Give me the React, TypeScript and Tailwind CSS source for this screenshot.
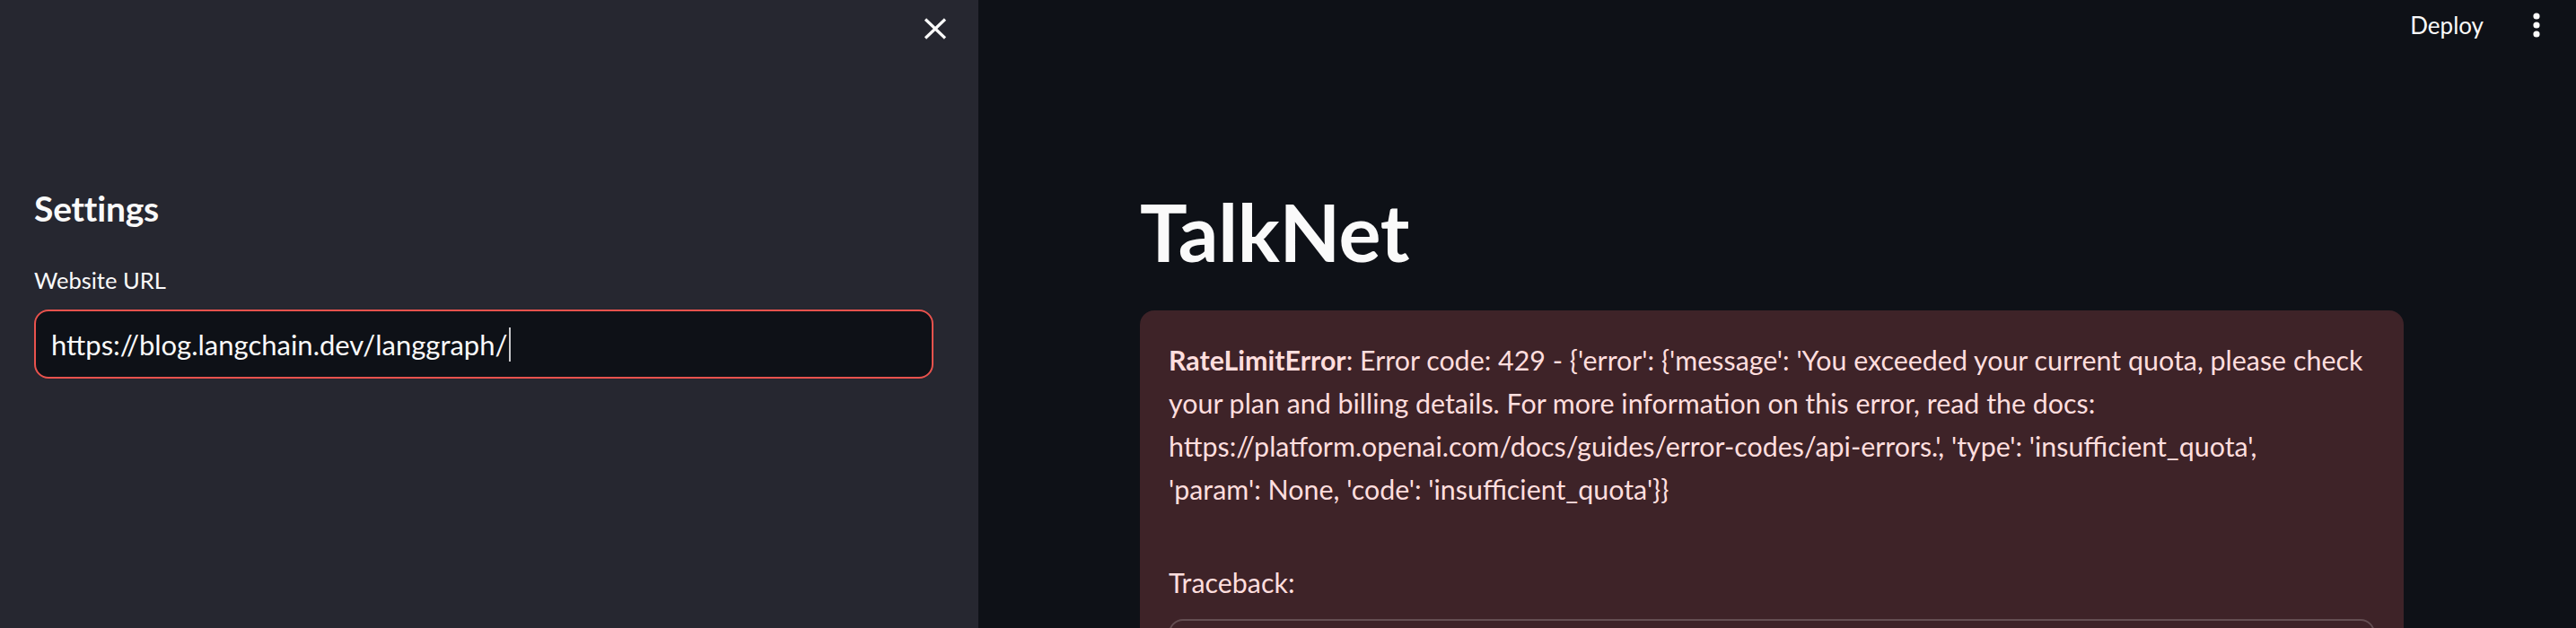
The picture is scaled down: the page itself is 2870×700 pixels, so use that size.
import React from "react";

function CloseIcon() {
  return (
    <svg width="26" height="24" viewBox="0 0 26 24" fill="none">
      <path d="M2 1.5 L24 22.5 M24 1.5 L2 22.5" stroke="#fafafa" strokeWidth="3.2" strokeLinecap="butt" />
    </svg>
  );
}

function DotsIcon() {
  return (
    <svg width="10" height="28" viewBox="0 0 10 28" fill="#fafafa">
      <circle cx="5" cy="4" r="3.6" />
      <circle cx="5" cy="14" r="3.6" />
      <circle cx="5" cy="24" r="3.6" />
    </svg>
  );
}

export default function App() {
  return (
    <div className="flex h-[700px] w-[2870px] overflow-hidden font-['Lato','Noto_Sans',sans-serif] text-[#fafafa]">
      {/* Sidebar */}
      <aside className="flex h-full w-[1090px] shrink-0 flex-col bg-[#262730]">
        <div className="flex shrink-0 justify-end pt-[20px] pr-[35px]">
          <CloseIcon />
        </div>
        <div className="mt-[165px] shrink-0 pl-[38px] pr-[50px]">
          <h2 className="text-[39px] font-bold leading-[46px] tracking-[-0.2px]">Settings</h2>
          <div className="mt-[39px] text-[25.5px] leading-[36px]">Website URL</div>
          <div className="mt-[15px] flex h-[77px] items-center rounded-[16px] border-2 border-[#e8524d] bg-[#0e1117] pl-[17px]">
            <span className="text-[31px] leading-[36px]">https://blog.langchain.dev/langgraph/</span>
            <span className="ml-[1px] h-[38px] w-[2px] bg-[#c9c9cc]" />
          </div>
        </div>
      </aside>

      {/* Main */}
      <main className="flex h-full flex-1 flex-col bg-[#0e1117]">
        <header className="flex h-[56px] shrink-0 items-center justify-end pr-[39px]">
          <span className="text-[26px] leading-[36px]">Deploy</span>
          <span className="ml-[54px] flex items-center">
            <DotsIcon />
          </span>
        </header>
        <div className="ml-[180px] mt-[152px] w-[1408px] shrink-0">
          <h1 className="text-[88px] font-bold leading-[100px] tracking-[-0.3px]">TalkNet</h1>
          <div className="mt-[38px] rounded-[16px] bg-[#3e2328] px-[32px] pt-[31px] text-[30.4px] leading-[48px] text-[#ffdede]">
            <div className="whitespace-nowrap">
              <span className="font-bold">RateLimitError</span>: Error code: 429 - {"{'error': {'message': 'You exceeded your current quota, please check"}
            </div>
            <div className="whitespace-nowrap">your plan and billing details. For more information on this error, read the docs:</div>
            <div className="whitespace-nowrap">https://platform.openai.com/docs/guides/error-codes/api-errors.', 'type': 'insufficient_quota',</div>
            <div className="whitespace-nowrap">{"'param': None, 'code': 'insufficient_quota'}}"}</div>
            <div className="mt-[56px]">Traceback:</div>
            <div className="mt-[17px] h-[200px] rounded-[16px] border-2 border-[#644e52]" />
          </div>
        </div>
      </main>
    </div>
  );
}
